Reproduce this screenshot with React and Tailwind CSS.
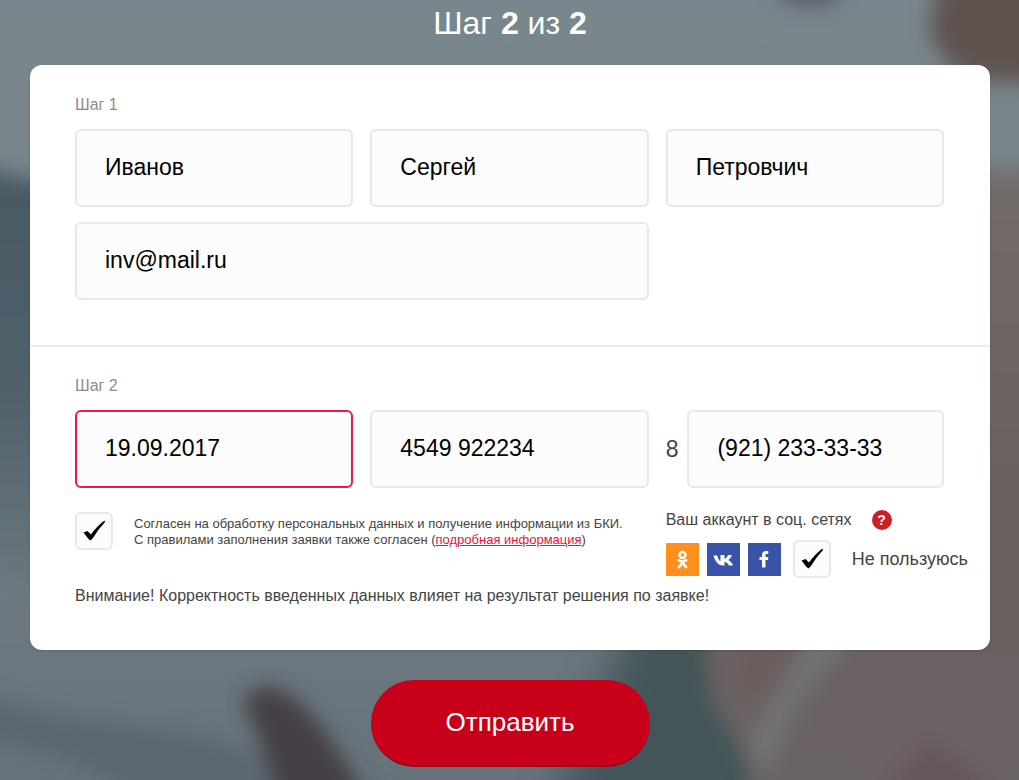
import { useState } from 'react'

function Backdrop() {
  return (
    <svg className="absolute inset-0 h-full w-full" viewBox="0 0 1019 780" preserveAspectRatio="none" aria-hidden="true">
      <defs>
        <linearGradient id="wall" x1="0" y1="0" x2="0" y2="1">
          <stop offset="0" stopColor="#78868d" />
          <stop offset="0.2" stopColor="#78868b" />
          <stop offset="0.85" stopColor="#6a777e" />
          <stop offset="1" stopColor="#66737a" />
        </linearGradient>
        <linearGradient id="shade" x1="0" y1="0" x2="0" y2="1">
          <stop offset="0" stopColor="#485963" />
          <stop offset="0.5" stopColor="#4e5f69" />
          <stop offset="1" stopColor="#6a777e" />
        </linearGradient>
        <linearGradient id="sleeve" x1="0" y1="0" x2="0" y2="1">
          <stop offset="0" stopColor="#726b69" />
          <stop offset="0.5" stopColor="#6a605f" />
          <stop offset="1" stopColor="#6a6364" />
        </linearGradient>
        <filter id="soft" x="-50%" y="-50%" width="200%" height="200%">
          <feGaussianBlur stdDeviation="10" />
        </filter>
        <filter id="wide" x="-50%" y="-50%" width="200%" height="200%">
          <feGaussianBlur stdDeviation="22" />
        </filter>
      </defs>
      <rect width="1019" height="780" fill="url(#wall)" />
      <g filter="url(#wide)">
        <path d="M640 600 L760 600 L800 840 L540 840 Z" fill="#435559" />
      </g>
      <g filter="url(#soft)">
        <path d="M-60 160 L80 190 L80 590 L-60 570 Z" fill="url(#shade)" />
        <path d="M-60 685 L60 715 L200 735 L400 800 L150 800 L60 760 L-60 730 Z" fill="#5b676f" />
        <path d="M700 620 L940 170 L1080 170 L1080 840 L755 840 Q752 760 728 730 Q700 700 708 620 Z" fill="url(#sleeve)" />
        <path d="M945 -40 L1080 -40 L1080 85 L975 80 Q930 60 930 20 Z" fill="#5e5250" />
        <path d="M770 -30 L850 -30 L835 4 L785 4 Z" fill="#565c64" />
        <path d="M755 630 L800 630 L750 705 L740 690 Z" fill="#6b5c5b" />
        <path d="M815 630 L860 630 L800 700 L765 780 L748 740 Z" fill="#737272" />
        <path d="M880 790 L930 740 L1000 790 Z" fill="#665759" />
        <path d="M243 703 Q252 680 282 690 Q322 712 372 810 L280 810 Q262 740 243 703 Z" fill="#443f44" />
      </g>
    </svg>
  )
}

function Field({ label, className = '', invalid = false, ...props }) {
  return (
    <input
      aria-label={label}
      aria-invalid={invalid}
      className={`h-[78px] w-full min-w-0 rounded-md border-2 bg-[#fcfcfc] px-7 pb-0.5 text-[23px] text-black outline-none ${
        invalid ? 'border-[#ee1a3f]' : 'border-[#e8e8e8]'
      } ${className}`}
      {...props}
    />
  )
}

function Tick({ id, checked, onChange }) {
  return (
    <span className="relative block h-[38px] w-[38px] shrink-0">
      <input
        id={id}
        type="checkbox"
        checked={checked}
        onChange={onChange}
        className="block h-full w-full appearance-none rounded-md border-2 border-[#e8e8e8] bg-[#fcfcfc]"
      />
      {checked && (
        <svg className="pointer-events-none absolute inset-0 h-full w-full" viewBox="0 0 38 38" aria-hidden="true">
          <path d="M8.5 20.5 L12.5 19 L16 22.5 Q22 14 29.5 8.5 L30 10 Q23 17.5 18 26 L15.5 28.5 L13.5 27 Z" fill="#000" />
        </svg>
      )}
    </span>
  )
}

function OkIcon() {
  return (
    <svg viewBox="0 0 33 33" className="h-full w-full" fill="none" stroke="#fff" aria-hidden="true">
      <circle cx="16.5" cy="12" r="3" strokeWidth="2.4" />
      <path d="M12.8 17.3 Q16.5 20 20.2 17.3 M16.5 19.8 L13 24 M16.5 19.8 L20 24" strokeWidth="2.6" strokeLinecap="round" />
    </svg>
  )
}

function VkIcon() {
  return (
    <svg viewBox="0 0 33 33" className="h-full w-full" aria-hidden="true">
      <path
        fill="#fff"
        d="M16 22.5 C11 22.5 8 18 6.5 12.5 H10.2 C11 15.5 12 17.5 13.5 18.3 V12 H17.5 V16 C18.8 15.6 20.2 14 21 12 H25 C24.3 14.2 22.8 16 21.3 17 C23 17.9 25 19.6 26 22.5 H21.8 C21 20.5 19.3 19.2 17.5 18.8 V22.5 Z"
      />
    </svg>
  )
}

function FacebookIcon() {
  return (
    <svg viewBox="0 0 33 33" className="h-full w-full" aria-hidden="true">
      <path fill="#fff" d="M14 24.5 V17 H11.5 V14 H14 V12 C14 9.3 15.7 8 18 8 H20.3 V11 H18.8 C17.8 11 17.5 11.5 17.5 12.3 V14 H20.3 L20 17 H17.5 V24.5 Z" />
    </svg>
  )
}

const networks = [
  { name: 'Одноклассники', color: 'bg-[#ff901e]', Icon: OkIcon },
  { name: 'ВКонтакте', color: 'bg-[#3853a8]', Icon: VkIcon },
  { name: 'Facebook', color: 'bg-[#3853a8]', Icon: FacebookIcon },
]

export default function App() {
  const [agree, setAgree] = useState(true)
  const [noSocial, setNoSocial] = useState(true)

  return (
    <div className="relative min-h-screen overflow-hidden bg-[#69777e] font-['Liberation_Sans',Arial,sans-serif] text-[#444]">
      <Backdrop />

      <form className="relative pr-[29px] pb-[13px] pl-[30px]" onSubmit={(e) => e.preventDefault()}>
        <h1 className="pt-1 text-center text-[32px] leading-[38px] text-white">
          Шаг <b>2</b> из <b>2</b>
        </h1>

        <div className="mx-auto mt-[23px] max-w-[960px] rounded-xl bg-white shadow-sm">
          {/* Step 1 */}
          <section className="border-b-2 border-[#ebebeb] pt-7 pr-[46px] pb-[45px] pl-[45px]">
            <h2 className="text-base leading-6 text-[#8c8c8c]">Шаг 1</h2>
            <div className="mt-3 grid grid-cols-3 gap-x-[17px] gap-y-[15px]">
              <Field label="Фамилия" defaultValue="Иванов" />
              <Field label="Имя" defaultValue="Сергей" />
              <Field label="Отчество" defaultValue="Петровчич" />
              <Field label="Email" type="email" defaultValue="inv@mail.ru" className="col-span-2" />
            </div>
          </section>

          {/* Step 2 */}
          <section className="pt-[27px] pr-[46px] pb-[42px] pl-[45px]">
            <h2 className="text-base leading-6 text-[#8c8c8c]">Шаг 2</h2>
            <div className="mt-3 grid grid-cols-3 gap-x-[17px]">
              <Field label="Дата" defaultValue="19.09.2017" invalid />
              <Field label="Серия и номер паспорта" defaultValue="4549 922234" />
              <div className="flex items-center gap-[9px]">
                <label htmlFor="phone" className="text-[23px]">8</label>
                <Field id="phone" label="Телефон" type="tel" defaultValue="(921) 233-33-33" />
              </div>
            </div>

            <div className="mt-5 grid grid-cols-3 gap-x-[17px]">
              <div className="col-span-2 mt-1 flex items-start gap-[21px]">
                <Tick id="agree" checked={agree} onChange={() => setAgree(!agree)} />
                <p className="pt-1 text-[13px] leading-4 whitespace-nowrap">
                  <label htmlFor="agree">
                    Согласен на обработку персональных данных и получение информации из БКИ.
                    <br />С правилами заполнения заявки также согласен
                  </label>{' '}
                  (<a href="#details" className="text-[#f0103c] underline">подробная информация</a>)
                </p>
              </div>

              <div className="whitespace-nowrap">
                <div className="flex items-center gap-5">
                  <span className="text-base leading-6">Ваш аккаунт в соц. сетях</span>
                  <button type="button" aria-label="Справка" className="h-5 w-5 rounded-full bg-[#cc1f24] text-sm leading-5 font-bold text-white">
                    ?
                  </button>
                </div>
                <div className="mt-2 flex items-center">
                  <div className="flex gap-2">
                    {networks.map(({ name, color, Icon }) => (
                      <button key={name} type="button" aria-label={name} className={`h-[33px] w-[33px] ${color}`}>
                        <Icon />
                      </button>
                    ))}
                  </div>
                  <label htmlFor="no-social" className="ml-3 flex items-center gap-[21px] text-lg">
                    <Tick id="no-social" checked={noSocial} onChange={() => setNoSocial(!noSocial)} />
                    Не пользуюсь
                  </label>
                </div>
              </div>
            </div>

            <p className="mt-1.5 text-base leading-6">
              Внимание! Корректность введенных данных влияет на результат решения по заявке!
            </p>
          </section>
        </div>

        <button
          type="submit"
          className="mx-auto mt-[30px] block h-[87px] w-[279px] rounded-[44px] border-b-2 border-[#a30015] bg-[#c80019] text-[26px] text-white"
        >
          Отправить
        </button>
      </form>
    </div>
  )
}
